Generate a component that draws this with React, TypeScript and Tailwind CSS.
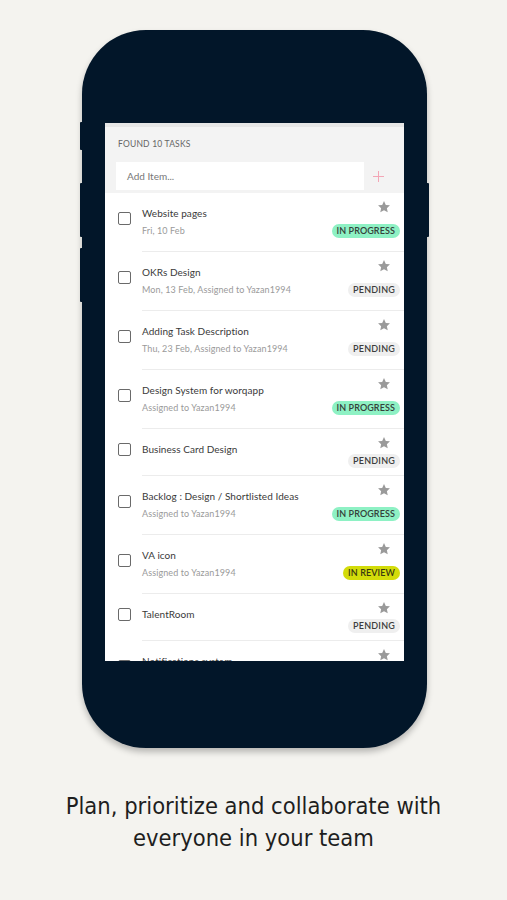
const tasks: {
  title: string;
  sub?: string;
  status: "progress" | "pending" | "review";
}[] = [
  { title: "Website pages", sub: "Fri, 10 Feb", status: "progress" },
  { title: "OKRs Design", sub: "Mon, 13 Feb, Assigned to Yazan1994", status: "pending" },
  { title: "Adding Task Description", sub: "Thu, 23 Feb, Assigned to Yazan1994", status: "pending" },
  { title: "Design System for worqapp", sub: "Assigned to Yazan1994", status: "progress" },
  { title: "Business Card Design", status: "pending" },
  { title: "Backlog : Design / Shortlisted Ideas", sub: "Assigned to Yazan1994", status: "progress" },
  { title: "VA icon", sub: "Assigned to Yazan1994", status: "review" },
  { title: "TalentRoom", status: "pending" },
  { title: "Notifications system", sub: "Assigned to Yazan1994", status: "pending" },
];

const Star = () => (
  <svg width="14" height="14" viewBox="0 0 24 24" className="fill-[#9a9a9a]">
    <path d="M12 1.8l3.1 6.6 7.1.8-5.3 4.9 1.5 7.1L12 17.6l-6.4 3.6 1.5-7.1L1.8 9.2l7.1-.8z" />
  </svg>
);

const Badge = ({ status }: { status: "progress" | "pending" | "review" }) => {
  if (status === "progress")
    return (
      <span className="rounded-full bg-[#8ef1c4] px-[5px] h-[14px] flex items-center text-[9px] font-semibold tracking-[0.1px] text-[#34403a]">
        IN PROGRESS
      </span>
    );
  if (status === "review")
    return (
      <span className="rounded-full bg-[#d3dc0a] px-[5px] h-[14px] flex items-center text-[9px] font-semibold tracking-[0.1px] text-[#3a3a10]">
        IN REVIEW
      </span>
    );
  return (
    <span className="rounded-full bg-[#efefef] px-[5px] h-[14px] flex items-center text-[9px] font-semibold tracking-[0.2px] text-[#3d3d3d]">
      PENDING
    </span>
  );
};

const Row = ({ task }: { task: (typeof tasks)[number] }) => {
  const tall = !!task.sub;
  return (
    <div className={`flex bg-white ${tall ? "h-[59px]" : "h-[47px]"}`}>
      <div className="w-[37px] shrink-0 pl-[13px]">
        <div
          className={`w-[13px] h-[13px] rounded-[2px] border-[1.5px] border-[#6a6a6a] ${
            tall ? "mt-[19px]" : "mt-[14px]"
          }`}
        />
      </div>
      <div className="flex-1 flex border-b border-[#ececec]">
        <div className="flex-1 min-w-0">
          <div className="mt-[13px] text-[10px] leading-[14px] tracking-[0.05px] text-[#3a3a3a]">{task.title}</div>
          {task.sub && (
            <div className="mt-[5px] text-[9px] leading-[12px] tracking-[0.1px] text-[#9a9a9a]">{task.sub}</div>
          )}
        </div>
        <div className="flex flex-col items-end pr-[4px] pt-[7px]">
          <div className="mr-[9px]">
            <Star />
          </div>
          <div className={tall ? "mt-[10px]" : "mt-[4px]"}>
            <Badge status={task.status} />
          </div>
        </div>
      </div>
    </div>
  );
};

export default function App() {
  return (
    <div className="min-h-[900px] w-full bg-[#f4f3ef] flex flex-col items-center font-['Lato',sans-serif]">
      <div className="pl-[2px] pt-[30px]">
        <div className="relative w-[345px] h-[718px] rounded-[64px] bg-[#021629] pt-[93px] px-[23px] shadow-[0_4px_6px_rgba(0,0,0,0.25)]">
          {/* side buttons */}
          <div className="absolute left-[-2px] top-[92px] w-[3px] h-[28px] rounded-l-[1px] bg-[#021629]" />
          <div className="absolute left-[-2px] top-[153px] w-[3px] h-[54px] rounded-l-[1px] bg-[#021629]" />
          <div className="absolute left-[-2px] top-[218px] w-[3px] h-[54px] rounded-l-[1px] bg-[#021629]" />
          <div className="absolute right-[-2px] top-[153px] w-[3px] h-[54px] rounded-r-[1px] bg-[#021629]" />

          <div className="w-[299px] h-[538px] overflow-hidden bg-white">
            <div className="h-[70px] bg-[#f3f3f3] border-t-[4px] border-[#e6e6e6]">
              <div className="pl-[13px] pt-[11px] text-[8.5px] leading-[12px] text-[#666] tracking-[0.2px]">
                FOUND 10 TASKS
              </div>
              <div className="mt-[12px] flex items-center">
                <div className="ml-[11px] w-[248px] h-[28px] bg-white flex items-center pl-[11px] text-[10px] text-[#777]">
                  Add Item...
                </div>
                <div className="ml-[9px] w-[11px] h-[11px] relative">
                  <div className="absolute left-[5px] top-0 w-[1px] h-[11px] bg-[#f3a6b6]" />
                  <div className="absolute top-[5px] left-0 h-[1px] w-[11px] bg-[#f3a6b6]" />
                </div>
              </div>
            </div>
            {tasks.map((t) => (
              <Row key={t.title} task={t} />
            ))}
          </div>
        </div>
      </div>
      <p className="mt-[42px] text-center text-[23.5px] leading-[32px] text-[#1e1e1e] font-['DejaVu_Sans',sans-serif] font-stretch-condensed">
        Plan, prioritize and collaborate with
        <br />
        everyone in your team
      </p>
    </div>
  );
}
